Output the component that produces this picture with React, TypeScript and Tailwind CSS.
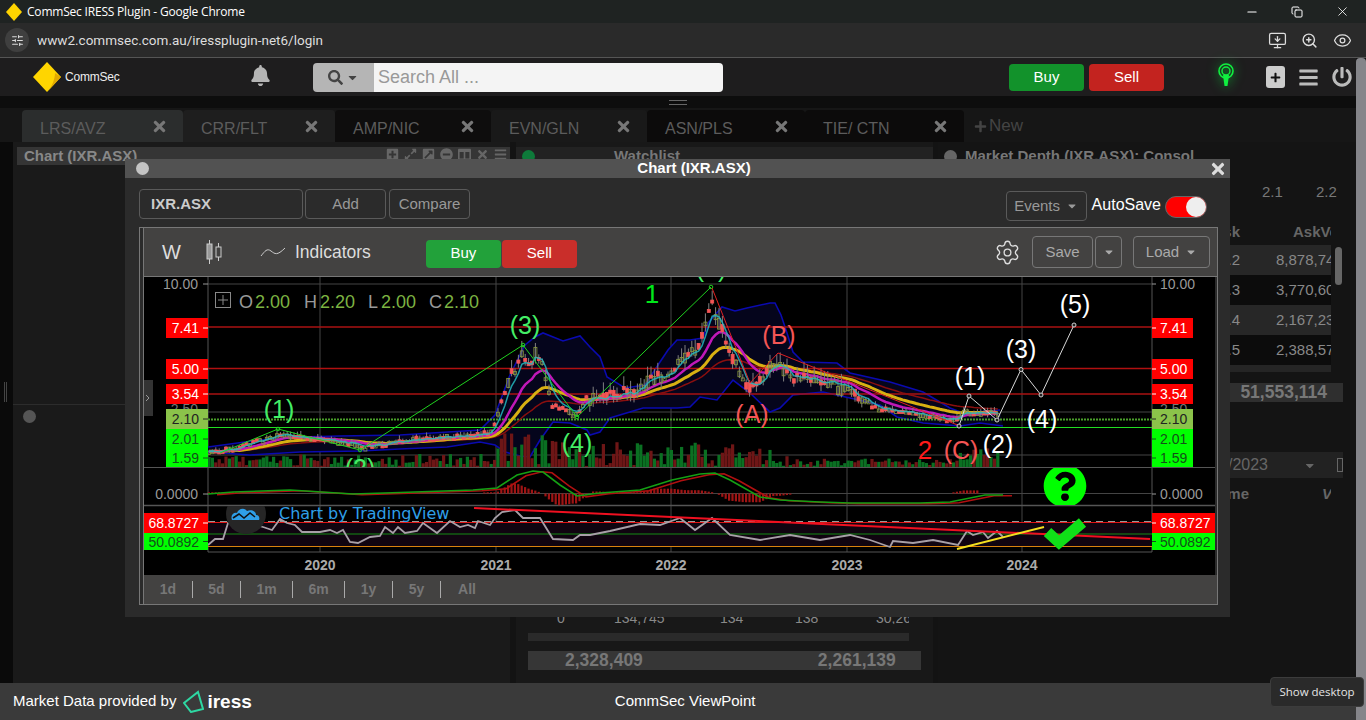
import { Eye, MonitorDown, Settings, ZoomIn, Minus, X, Copy, SlidersHorizontal } from "lucide-react";
import { FaBars, FaBell, FaCaretDown, FaColumns, FaExpandAlt, FaExternalLinkSquareAlt, FaMinusCircle, FaPlus, FaPlusSquare, FaPowerOff, FaQuestionCircle, FaSearch, FaTimes } from "react-icons/fa";

type Pt = [number, number];

// price shape, page coordinates
const closeKeys: Pt[] = [
  [208, 452], [230, 449], [245, 445], [260, 440], [282, 435], [300, 437], [320, 440], [345, 441], [355, 445], [365, 446],
  [385, 444], [420, 438], [445, 437], [470, 436], [490, 432], [497, 418], [503, 395], [510, 378], [517, 365], [523, 350],
  [530, 362], [537, 350], [545, 375], [552, 405], [562, 408], [575, 415], [585, 400], [600, 398], [625, 392], [640, 390],
  [650, 380], [665, 375], [672, 372], [682, 360], [690, 355], [697, 350], [703, 335], [708, 310], [712, 296], [717, 320],
  [724, 332], [730, 355], [738, 370], [745, 385], [752, 388], [760, 378], [770, 368], [778, 360], [785, 375], [800, 378],
  [825, 383], [840, 390], [850, 392], [860, 398], [875, 407], [890, 410], [905, 413], [925, 416], [945, 419], [958, 420],
  [966, 410], [975, 415], [990, 412], [1000, 414],
];
const upperBand: Pt[] = [
  [208, 447], [260, 440], [300, 437], [340, 436], [400, 435], [480, 430], [495, 415], [510, 375], [525, 345], [535, 337], [543, 333],
  [563, 341], [580, 336], [590, 347], [600, 357], [607, 377], [625, 388], [645, 385], [660, 362], [668, 350], [677, 340], [690, 340], [703, 338],
  [708, 323], [722, 307], [735, 311], [747, 308], [770, 303], [775, 303], [781, 315], [787, 333], [793, 352], [803, 362], [837, 363],
  [850, 373], [890, 382], [923, 392], [950, 408], [963, 413], [1000, 410],
];
const lowerBand: Pt[] = [
  [208, 452], [250, 455], [300, 452], [360, 451], [400, 449], [447, 447], [480, 442], [495, 445], [505, 452], [520, 456], [530, 457],
  [540, 440], [553, 422], [570, 423], [587, 430], [590, 435], [600, 432], [610, 418], [643, 408], [677, 408], [690, 407], [700, 397],
  [717, 400], [733, 380], [750, 393], [770, 412], [780, 408], [793, 395], [823, 392], [850, 398], [880, 405], [897, 417], [923, 423],
  [960, 426], [980, 423], [1003, 426],
];
const macdKeys: Pt[] = [
  [208, 494], [233, 492], [290, 490], [353, 494], [400, 492.5], [473, 490], [497, 488], [517, 475], [533, 471], [543, 472], [560, 485],
  [577, 496], [600, 493], [640, 490], [672, 480], [700, 474], [715, 473], [730, 480], [760, 497], [780, 500], [820, 502], [850, 503],
  [920, 503], [950, 502], [960, 500], [985, 495], [1003, 495],
];
const rsiKeys: Pt[] = [
  [208, 545], [215, 539], [223, 539], [228, 523], [243, 520], [255, 525], [263, 527], [272, 530], [280, 519], [287, 523], [295, 525],
  [302, 532], [320, 532], [330, 530], [337, 533], [343, 530], [350, 542], [358, 543], [370, 537], [380, 536], [385, 527], [393, 533],
  [398, 527], [405, 533], [417, 531], [423, 523], [437, 533], [450, 521], [460, 527], [468, 525], [475, 528], [478, 521], [490, 525],
  [495, 518], [502, 512], [515, 510], [523, 518], [540, 518], [553, 539], [573, 540], [580, 535], [590, 535], [610, 531], [640, 524],
  [660, 525], [680, 518], [695, 530], [712, 518], [730, 535], [760, 540], [790, 535], [820, 540], [850, 535], [870, 540], [890, 547],
  [893, 541], [913, 543], [933, 540], [958, 545], [967, 531], [973, 535], [983, 532], [988, 538], [997, 531], [1003, 537],
];

function lerp(keys: Pt[], x: number) {
  for (let i = 1; i < keys.length; i++) {
    if (x <= keys[i][0]) {
      const [x0, y0] = keys[i - 1];
      const [x1, y1] = keys[i];
      return y0 + ((y1 - y0) * (x - x0)) / (x1 - x0);
    }
  }
  return keys[keys.length - 1][1];
}
function rnd(i: number) {
  const s = Math.sin(i * 12.9898 + 4.1) * 43758.5453;
  return s - Math.floor(s);
}
const pts = (k: Pt[]) => k.map((p) => p.join(",")).join(" ");

const candles = Array.from({ length: 233 }, (_, i) => {
  const x = 209 + i * 3.4;
  const base = lerp(closeKeys, x);
  const scale = base < 400 ? 13 : 5;
  const close = base + (rnd(i) - 0.5) * scale;
  const open = base + (rnd(i + 300) - 0.5) * scale;
  return { x, open, close, hi: Math.min(open, close) - rnd(i + 600) * scale * 0.9, lo: Math.max(open, close) + rnd(i + 900) * scale * 0.5 };
});
function ema(period: number) {
  const a = 2 / (period + 1);
  let v = candles[0].close;
  return candles.map((c) => {
    v = a * c.close + (1 - a) * v;
    return `${c.x.toFixed(1)},${v.toFixed(1)}`;
  }).join(" ");
}
function volEnvelope(x: number) {
  if (x < 300) return 10;
  if (x < 490) return 12;
  if (x < 560) return 34;
  if (x < 735) return 24;
  if (x < 790) return 18;
  if (x < 960) return 8;
  return 18;
}
const bars = candles.map((c, i) => ({ x: c.x, h: 1 + rnd(i + 1200) * volEnvelope(c.x), up: c.close <= c.open }));

function WaveLabel({ x, y, c, t, size = 25 }: { x: number; y: number; c: string; t: string; size?: number }) {
  return <text x={x} y={y} fill={c} fontSize={size} textAnchor="middle">{t}</text>;
}
function LeftTag({ x, y, h, w, bg, fg, t }: { x: number; y: number; h: number; w: number; bg: string; fg: string; t: string }) {
  return (
    <g>
      <rect x={x} y={y} width={w} height={h} fill={bg} />
      <line x1={x + w - 5} x2={x + w} y1={y + h / 2} y2={y + h / 2} stroke={fg} />
      <text x={x + w - 9} y={y + h / 2 + 5} fontSize={14} fill={fg} textAnchor="end">{t}</text>
    </g>
  );
}
function RightTag({ x, y, h, w, bg, fg, t }: { x: number; y: number; h: number; w: number; bg: string; fg: string; t: string }) {
  return (
    <g>
      <rect x={x} y={y} width={w} height={h} fill={bg} />
      <line x1={x} x2={x + 4} y1={y + h / 2} y2={y + h / 2} stroke={fg} />
      <text x={x + 8} y={y + h / 2 + 5} fontSize={14} fill={fg}>{t}</text>
    </g>
  );
}

function Chart() {
  const tags = [
    { y: 318, h: 20, bg: "#ff0000", fg: "#ffffff", t: "7.41" },
    { y: 359, h: 20, bg: "#ff0000", fg: "#ffffff", t: "5.00" },
    { y: 384, h: 20, bg: "#ff0000", fg: "#ffffff", t: "3.54" },
    { y: 409, h: 20, bg: "#8bc34a", fg: "#222222", t: "2.10" },
    { y: 429, h: 20, bg: "#00ff00", fg: "#14501a", t: "2.01" },
    { y: 449, h: 18, bg: "#00ff00", fg: "#14501a", t: "1.59" },
  ];
  return (
    <svg viewBox="144 277 1071 298" width="1071" height="298" className="block bg-black">
      <defs>
        <clipPath id="q"><rect x="1030" y="468" width="80" height="37" /></clipPath>
        <clipPath id="price"><rect x="144" y="277" width="1071" height="190" /></clipPath>
        <clipPath id="tv"><rect x="208" y="506" width="100" height="46" /></clipPath>
      </defs>

      {/* grid */}
      {[320, 496, 671, 847, 1022].map((x) => <line key={x} x1={x} x2={x} y1="277" y2="552" stroke="#444" />)}
      {[284, 412, 455].map((y) => <line key={y} x1="208" x2="1152" y1={y} y2={y} stroke="#444" />)}
      <line x1="208" x2="208" y1="277" y2="552" stroke="#555" />
      <line x1="1152" x2="1152" y1="277" y2="552" stroke="#555" />

      {/* bollinger */}
      <polygon points={pts([...upperBand, ...[...lowerBand].reverse()])} fill="#05051c" />
      <polyline points={pts(upperBand)} fill="none" stroke="#0a0ab0" strokeWidth="1.6" />
      <polyline points={pts(lowerBand)} fill="none" stroke="#0a0ab0" strokeWidth="1.6" />

      {/* levels */}
      <line x1="208" x2="1152" y1="327" y2="327" stroke="#a81212" strokeWidth="1.3" />
      <line x1="208" x2="1152" y1="368.5" y2="368.5" stroke="#b01010" strokeWidth="1.3" />
      <line x1="208" x2="1152" y1="394" y2="394" stroke="#a81212" strokeWidth="1.3" />
      <line x1="208" x2="1152" y1="419.5" y2="419.5" stroke="#4aa02a" strokeWidth="2" strokeDasharray="2 1" />
      <line x1="208" x2="1152" y1="427.5" y2="427.5" stroke="#22dd22" strokeWidth="1" />

      {/* volume */}
      {bars.map((b) => <rect key={b.x} x={b.x - 1.6} y={467 - b.h} width="3.2" height={b.h} fill={b.up ? "#0a7022" : "#6e1616"} />)}

      {/* moving averages under candles */}
      <polyline points={ema(40)} fill="none" stroke="#8a0f0f" strokeWidth="1.5" />
      <polyline points={ema(24)} fill="none" stroke="#d8b012" strokeWidth="3" />
      <polyline points={ema(12)} fill="none" stroke="#c018b8" strokeWidth="2.5" />

      {/* candles */}
      {candles.map((c) => {
        const up = c.close <= c.open;
        return (
          <g key={c.x}>
            <line x1={c.x} x2={c.x} y1={c.hi} y2={c.lo} stroke="#808080" />
            <rect x={c.x - 1.5} y={Math.min(c.open, c.close)} width="3" height={Math.max(3, Math.abs(c.open - c.close))} fill={up ? "none" : "#f45555"} stroke={up ? "#8c9c3c" : "#f45555"} strokeWidth="0.8" />
          </g>
        );
      })}
      <polyline points={ema(4)} fill="none" stroke="#25b8c0" strokeWidth="1.5" opacity="0.85" />

      {/* waves */}
      <polyline points="220,453 278,429 360,450 523,345 577,417 711,287" fill="none" stroke="#1fd11f" />
      {[[278, 429], [360, 450], [523, 345], [577, 417], [711, 287]].map(([x, y]) => <circle key={x} cx={x} cy={y} r="1.8" fill="none" stroke="#1fd11f" />)}
      <polyline points="712,288 750,383 778,353 960,426" fill="none" stroke="#e02020" />
      <polyline points="959,426 969,396 997,420 1021,369.5 1041,395 1074,325" fill="none" stroke="#d8d8d8" />
      {[[959, 426], [969, 396], [997, 420], [1021, 369.5], [1041, 395], [1074, 325]].map(([x, y]) => <circle key={x} cx={x} cy={y} r="2" fill="#222" stroke="#d0d0d0" />)}

      <g clipPath="url(#price)">
        <WaveLabel x={279} y={418} c="#44ee66" t="(1)" />
        <WaveLabel x={360} y={477} c="#44ee66" t="(2)" />
        <WaveLabel x={525} y={334} c="#44ee66" t="(3)" />
        <WaveLabel x={577} y={452} c="#44ee66" t="(4)" />
        <WaveLabel x={711} y={277} c="#44ee66" t="(5)" />
        <WaveLabel x={652} y={303} c="#00e81a" t="1" size={26} />
        <WaveLabel x={779} y={344} c="#f45555" t="(B)" />
        <WaveLabel x={752} y={423} c="#f45555" t="(A)" />
        <WaveLabel x={925} y={459} c="#ff1a1a" t="2" size={26} />
        <WaveLabel x={961} y={459} c="#f45555" t="(C)" />
        <WaveLabel x={970} y={385} c="#ffffff" t="(1)" />
        <WaveLabel x={1021} y={358} c="#ffffff" t="(3)" />
        <WaveLabel x={1075} y={313} c="#ffffff" t="(5)" />
        <WaveLabel x={1042} y={428} c="#ffffff" t="(4)" />
        <WaveLabel x={998} y={453} c="#ffffff" t="(2)" />
      </g>

      {/* legend */}
      <rect x="215.5" y="292.5" width="15" height="15" fill="none" stroke="#888" />
      <path d="M223 295v10M218 300h10" stroke="#888" />
      <g fontSize="18">
        <text x="239" y="308" fill="#999">O</text><text x="255" y="308" fill="#7cb342">2.00</text>
        <text x="304" y="308" fill="#999">H</text><text x="320" y="308" fill="#7cb342">2.20</text>
        <text x="368" y="308" fill="#999">L</text><text x="381" y="308" fill="#7cb342">2.00</text>
        <text x="429" y="308" fill="#999">C</text><text x="444" y="308" fill="#7cb342">2.10</text>
      </g>

      {/* price scales */}
      <text x="198" y="289" fontSize="14" fill="#999" textAnchor="end">10.00</text>
      <text x="1160" y="289" fontSize="14" fill="#999">10.00</text>
      <line x1="203" x2="208" y1="284" y2="284" stroke="#999" />
      <line x1="1152" x2="1156" y1="284" y2="284" stroke="#999" />
      <text x="198" y="414" fontSize="14" fill="#777" textAnchor="end">2.50</text>
      <text x="1160" y="414" fontSize="14" fill="#777">2.50</text>
      {tags.map((t) => (
        <g key={t.t}>
          <LeftTag x={166} y={t.y} w={42} h={t.h} bg={t.bg} fg={t.fg} t={t.t} />
          <RightTag x={1152} y={t.y} w={41} h={t.h} bg={t.bg} fg={t.fg} t={t.t} />
        </g>
      ))}

      {/* side tab */}
      <rect x="144" y="380" width="9" height="36" fill="#333" />
      <path d="M146 395l3 3-3 3" fill="none" stroke="#999" />

      {/* pane separators */}
      <line x1="144" x2="1215" y1="467.5" y2="467.5" stroke="#555" />
      <line x1="144" x2="1215" y1="505.5" y2="505.5" stroke="#555" strokeWidth="1.5" />

      {/* macd */}
      <line x1="208" x2="1152" y1="493.5" y2="493.5" stroke="#444" />
      {bars.map((b, i) => {
        const m = lerp(macdKeys, b.x);
        const s = lerp(macdKeys, b.x - 14);
        const h = Math.min(12, Math.abs(m - s) * 1.1);
        if (h < 1 || b.x > 980) return null;
        return <rect key={i} x={b.x - 1.2} y={m < s ? 493.5 - h : 493.5} width="2.2" height={h} fill="#a01414" />;
      })}
      <polyline points={pts(macdKeys.map(([x, y]) => [x + 9, y + 0.8] as Pt))} fill="none" stroke="#b01010" strokeWidth="1.6" />
      <polyline points={pts(macdKeys)} fill="none" stroke="#14a014" strokeWidth="1.6" />
      <text x="198" y="499" fontSize="14" fill="#999" textAnchor="end">0.0000</text>
      <text x="1160" y="499" fontSize="14" fill="#999">0.0000</text>
      <line x1="203" x2="208" y1="494" y2="494" stroke="#999" />
      <line x1="1152" x2="1156" y1="494" y2="494" stroke="#999" />

      {/* rsi */}
      <rect x="208" y="522" width="944" height="24" fill="#100410" />
      <line x1="208" x2="1152" y1="521.5" y2="521.5" stroke="#999" strokeDasharray="7 5" />
      <line x1="208" x2="1152" y1="522.5" y2="522.5" stroke="#e01515" />
      <line x1="208" x2="1152" y1="534" y2="534" stroke="#158a15" />
      <line x1="208" x2="1152" y1="546.5" y2="546.5" stroke="#d8820e" />
      <polyline points={pts(rsiKeys)} fill="none" stroke="#a8a0a8" strokeWidth="1.8" />
      <line x1="474" y1="508" x2="1150" y2="539" stroke="#f01020" strokeWidth="2" />
      <line x1="957" y1="549" x2="1044" y2="527" stroke="#f5e020" strokeWidth="2" />
      <line x1="208" x2="1152" y1="552" y2="552" stroke="#555" />
      <LeftTag x={144} y={513} w={64} h={20} bg="#ff0000" fg="#ffffff" t="68.8727" />
      <LeftTag x={144} y={533} w={64} h={17} bg="#00ff00" fg="#14501a" t="50.0892" />
      <RightTag x={1152} y={513} w={64} h={20} bg="#ff0000" fg="#ffffff" t="68.8727" />
      <RightTag x={1152} y={533} w={64} h={17} bg="#00ff00" fg="#14501a" t="50.0892" />

      {/* watermark */}
      <g clipPath="url(#tv)">
        <circle cx="246" cy="514" r="20" fill="#262626" />
      </g>
      <path d="M232 520c-2-5 2-8 5-7 1-4 7-6 10-2 4-2 9 0 9 4 3 0 4 3 3 5z" fill="#2f9fe8" />
      <path d="M233 518l6-4 5 4 6-5 5 4" fill="none" stroke="#111" strokeWidth="1.6" />
      <text x="279" y="519" fontSize="16" fill="#2f9fe8" fontFamily="'DejaVu Sans', sans-serif">Chart by TradingView</text>

      {/* badges */}
      <g clipPath="url(#q)">
        <FaQuestionCircle x={1043} y={464} size={44} color="#00ff00" />
      </g>
      <path d="M1047.5 532l11.5 10.5 23.5-20" fill="none" stroke="#10e018" strokeWidth="11" />

      {/* x axis */}
      {[[320, "2020"], [496, "2021"], [671, "2022"], [847, "2023"], [1022, "2024"]].map(([x, t]) => (
        <text key={t} x={x} y="570" fontSize="14" fontWeight="700" fill="#aaa" textAnchor="middle">{t}</text>
      ))}
    </svg>
  );
}

function ChartDialog() {
  return (
    <div className="absolute left-[125px] top-[159px] flex h-[458px] w-[1105px] flex-col bg-[#2b2b2b]">
      <div className="relative flex h-[19px] shrink-0 items-center justify-center bg-[#525252] pl-[33px]">
        <span className="absolute left-[11px] h-[13px] w-[13px] rounded-full bg-[#c4c4c4]" />
        <span className="text-[15px] font-bold text-white">Chart (IXR.ASX)</span>
        <FaTimes className="absolute right-[3px] text-[18px] text-[#dddddd]" />
      </div>
      <div className="flex h-[49px] shrink-0 items-start pl-[14px] pr-[23px]">
        <div className="mt-[11px] flex h-[30px] w-[164px] items-center rounded border border-[#5a5a5a] pl-[11px] pt-px text-[15px] font-bold text-[#cccccc]">IXR.ASX</div>
        <div className="ml-[2px] mt-[11px] flex h-[30px] w-[81px] items-center justify-center rounded border border-[#5a5a5a] pt-px text-[15px] text-[#999999]">Add</div>
        <div className="ml-[3px] mt-[11px] flex h-[30px] w-[81px] items-center justify-center rounded border border-[#5a5a5a] pt-px text-[15px] text-[#999999]">Compare</div>
        <div className="ml-auto mt-[13px] flex h-[30px] w-[81px] items-center justify-center gap-[6px] rounded border border-[#5a5a5a] text-[15px] text-[#999999]">Events <FaCaretDown className="text-[12px]" /></div>
        <span className="ml-[5px] mt-[17px] text-[16px] leading-[20px] text-white">AutoSave</span>
        <div className="ml-[4px] mt-[18px] flex h-[22px] w-[42px] justify-end rounded-full border border-[#666666] bg-[#ff0000]">
          <span className="h-[20px] w-[20px] rounded-full bg-[#eeeeee]" />
        </div>
      </div>
      <div className="ml-[14px] w-[1079px] border border-[#777777] pl-[3px]">
        <div className="border-l border-[#777777]">
          <div className="flex h-[49px] items-center border-b border-[#777777] bg-[#434241]">
            <span className="ml-[18px] w-[20px] text-[20px] text-[#dddddd]">W</span>
            <svg width="18" height="24" viewBox="0 0 18 24" className="ml-[23px] text-[#cccccc]" fill="none" stroke="currentColor">
              <path d="M4.5 0v24M13.5 3v18" />
              <rect x="2" y="4" width="5" height="15" fill="#999" />
              <rect x="11" y="7" width="5" height="10" fill="#434241" />
            </svg>
            <svg width="26" height="14" viewBox="0 0 26 14" className="ml-[37px]" fill="none" stroke="#cccccc">
              <path d="M1 11c4-5 6-8 10-5s6 5 14-3" />
            </svg>
            <span className="ml-[9px] text-[17.5px] text-[#dddddd]">Indicators</span>
            <div className="ml-[55px] mt-[3px] flex h-[28px] w-[75px] items-center justify-center rounded bg-[#22a13a] text-[15px] text-white">Buy</div>
            <div className="ml-px mt-[3px] flex h-[28px] w-[75px] items-center justify-center rounded bg-[#c92e2a] text-[15px] text-white">Sell</div>
            <Settings className="ml-auto h-[27px] w-[27px] text-[#dddddd]" strokeWidth={1.2} />
            <div className="ml-[11px] flex h-[32px] w-[61px] items-center justify-center rounded-sm border border-[#777777] text-[15px] text-[#aaaaaa]">Save</div>
            <div className="ml-[2px] flex h-[32px] w-[27px] items-center justify-center rounded-sm border border-[#777777] text-[#aaaaaa]"><FaCaretDown className="text-[12px]" /></div>
            <div className="ml-[11px] mr-[7px] flex h-[32px] w-[77px] items-center justify-center gap-[6px] rounded border border-[#777777] text-[15px] text-[#aaaaaa]">Load <FaCaretDown className="text-[12px]" /></div>
          </div>
          <Chart />
          <div className="flex h-[29px] items-center bg-[#434241] text-[14px] font-bold text-[#777777]">
            {[["1d", 49], ["5d", 48], ["1m", 52], ["6m", 52], ["1y", 48], ["5y", 48], ["All", 52]].map(([t, w], i) => (
              <span key={t} style={{ width: w as number }} className={`flex h-[17px] items-center justify-center ${i < 6 ? "border-r border-[#aaaaaa]" : ""}`}>{t}</span>
            ))}
          </div>
        </div>
      </div>
    </div>
  );
}

function BackgroundTabs() {
  const tabs = [
    { t: "LRS/AVZ", w: 161, bg: "bg-[#2b2d2d]" },
    { t: "CRR/FLT", w: 152, bg: "bg-[#1e1e1e]" },
    { t: "AMP/NIC", w: 156, bg: "bg-[#0e0d0d]" },
    { t: "EVN/GLN", w: 156, bg: "bg-[#191919]" },
    { t: "ASN/PLS", w: 158, bg: "bg-[#0c0b0b]" },
    { t: "TIE/ CTN", w: 159, bg: "bg-[#0c0b0b]" },
  ];
  return (
    <div className="flex h-[34px] shrink-0 items-end bg-[#161616] pl-[22px]">
      {tabs.map((tab) => (
        <div key={tab.t} style={{ width: tab.w }} className={`flex h-[32px] items-center rounded-t pl-[18px] pr-[15px] text-[16px] text-[#5c5c5c] ${tab.bg}`}>
          <span className="pt-[5px]">{tab.t}</span>
          <FaTimes className="ml-auto text-[17px] text-[#777777]" />
        </div>
      ))}
      <div className="flex h-[32px] w-[78px] items-center gap-[2px] pl-[10px] text-[17px] text-[#444444]">
        <FaPlus className="text-[13px]" /> New
      </div>
    </div>
  );
}

function DepthRow({ a, b, light }: { a: string; b: string; light: boolean }) {
  return (
    <div className={`flex h-[30px] w-[393px] items-center overflow-hidden whitespace-nowrap text-[15px] text-[#888888] ${light ? "bg-[#272727]" : "bg-[#0c0c0c]"}`}>
      <span className="w-[302px] shrink-0 text-right">{a}</span>
      <span className="shrink-0 pl-[36px]">{b}</span>
    </div>
  );
}

export default function App() {
  return (
    <div className="relative flex h-[720px] w-[1366px] flex-col overflow-hidden bg-[#131313] font-['Liberation_Sans',Arial,sans-serif]">
      {/* browser title bar */}
      <div className="flex h-[23px] shrink-0 items-center bg-[#1f2322] pl-[6px] font-['Open_Sans',sans-serif] text-[12px] text-white">
        <svg width="16" height="18" viewBox="0 0 16 18"><path d="M8 0l8 9-8 9-8-9z" fill="#ffd400" /></svg>
        <span className="ml-[5px] tracking-[-0.2px]">CommSec IRESS Plugin - Google Chrome</span>
        <Minus className="ml-auto h-[14px] w-[14px] text-white" />
        <Copy className="ml-[32px] h-[12px] w-[12px] text-white" />
        <X className="ml-[32px] mr-[16px] h-[15px] w-[15px] text-white" strokeWidth={1.3} />
      </div>
      {/* address bar */}
      <div className="flex h-[35px] shrink-0 items-center border-b border-[#555555] bg-[#2a2a2a] pl-[5px] pr-[14px]">
        <span className="flex h-[24px] w-[24px] items-center justify-center rounded-full bg-[#3f3f3f]">
          <SlidersHorizontal className="h-[13px] w-[13px] text-[#dddddd]" />
        </span>
        <span className="ml-[8px] font-['Roboto',sans-serif] text-[13.5px] text-[#dddddd]">www2.commsec.com.au/iressplugin-net6/login</span>
        <MonitorDown className="ml-auto h-[19px] w-[19px] text-[#dddddd]" strokeWidth={1.6} />
        <ZoomIn className="ml-[14px] h-[17px] w-[17px] text-[#dddddd]" strokeWidth={2} />
        <Eye className="ml-[15px] h-[19px] w-[19px] text-[#dddddd]" strokeWidth={1.6} />
      </div>

      <div className="flex min-h-0 flex-1">
        <div className="flex min-w-0 flex-1 flex-col">
          {/* app header */}
          <div className="flex h-[38px] shrink-0 items-center bg-[#1e1d1e]">
            <svg width="28" height="30" viewBox="0 0 28 30" className="ml-[33px]">
              <path d="M14 0l14 15-14 15L0 15z" fill="#ffd500" />
              <path d="M14 30l14-15-6-4c0 6-3 14-8 19z" fill="#e0a800" />
            </svg>
            <span className="ml-[4px] w-[60px] text-[12px] tracking-[-0.2px] text-[#eeeeee]">CommSec</span>
            <FaBell className="ml-[125px] mb-[3px] text-[21px] text-[#b5b5b5]" />
            <div className="ml-[42px] flex h-[29px] w-[410px] overflow-hidden rounded">
              <div className="flex w-[61px] items-center justify-center gap-[3px] bg-[#b5b5b5] text-[#444444]">
                <FaSearch className="text-[15px]" /><FaCaretDown className="text-[13px]" />
              </div>
              <div className="flex flex-1 items-center bg-[#f4f4f4] pl-[4px] text-[18px] text-[#999999]">Search All ...</div>
            </div>
            <div className="ml-[286px] flex h-[27px] w-[75px] items-center justify-center rounded bg-[#12922b] text-[15px] text-white">Buy</div>
            <div className="ml-[5px] flex h-[27px] w-[75px] items-center justify-center rounded bg-[#c3231f] text-[15px] text-white">Sell</div>
            <svg width="18" height="24" viewBox="0 0 18 24" className="ml-[53px] mb-[4px] drop-shadow-[0_0_6px_rgba(0,255,60,0.6)]" fill="none" stroke="#10f040">
              <circle cx="9" cy="8" r="7" strokeWidth="1.6" />
              <circle cx="9" cy="8" r="4" strokeWidth="1.4" />
              <path d="M6 12h6l-1.5 11h-3z" fill="#10f040" stroke="none" />
            </svg>
            <span className="ml-[31px] flex h-[22px] w-[19px] items-center justify-center rounded-[3px] bg-[#cccccc] text-[#111111]"><FaPlus className="text-[11px]" /></span>
            <FaBars className="ml-[13px] text-[21px] text-[#bbbbbb]" />
            <FaPowerOff className="ml-[13px] text-[20px] text-[#bbbbbb]" />
          </div>
          {/* splitter */}
          <div className="flex h-[12px] shrink-0 items-center justify-center bg-[#0d0d0d]">
            <span className="h-[5px] w-[18px] border-y border-[#666666]" />
          </div>
          <BackgroundTabs />

          {/* docked panels behind the dialog */}
          <div className="flex min-h-0 flex-1">
            <div className="w-[13px] shrink-0 bg-[#0a0a0a] pt-[240px] pl-[4px]">
              <span className="block h-[20px] w-[3px] border-x border-[#444444]" />
            </div>
            <div className="flex w-[497px] shrink-0 flex-col bg-[#1a1a1a] pt-[5px]">
              <div className="ml-[4px] flex h-[18px] items-center justify-between bg-[#353535] pl-[7px] pr-[3px] text-[15px] font-bold text-[#888888]">
                Chart (IXR.ASX)
                <span className="flex items-center gap-[5px] pb-[4px] text-[13px] text-[#666666]">
                  <FaPlusSquare /><FaExpandAlt /><FaExternalLinkSquareAlt /><FaMinusCircle /><FaColumns /><FaTimes /><FaBars />
                </span>
              </div>
              <div className="mt-[239px] h-px bg-[#2c2c2c]" />
              <span className="ml-[10px] mt-[5px] h-[13px] w-[13px] rounded-full bg-[#555555]" />
            </div>
            <div className="ml-[6px] flex w-[417px] shrink-0 flex-col bg-[#181818] pt-[5px]">
              <div className="flex h-[18px] items-center bg-[#222222] pl-[6px] text-[15px] font-bold text-[#777777]">
                <span className="h-[13px] w-[13px] rounded-full bg-[#0e7a3a]" />
                <span className="ml-[79px]">Watchlist</span>
              </div>
              <div className="flex-1" />
              <div className="relative h-[12px] whitespace-nowrap text-[14px] leading-[12px] text-[#888888]">
                <span className="absolute left-[41px]">0</span>
                <span className="absolute left-[98px]">134,745</span>
                <span className="absolute left-[204px]">134</span>
                <span className="absolute left-[279px]">138</span>
                <span className="absolute left-[360px] w-[33px] overflow-hidden">30,261</span>
              </div>
              <div className="ml-[12px] mt-[9px] h-[8px] w-[381px] bg-[#2a2a2a]" />
              <div className="ml-[12px] mt-[10px] flex h-[19px] w-[393px] items-center bg-[#363636] text-[17.5px] font-bold text-[#777777]">
                <span className="ml-[37px]">2,328,409</span>
                <span className="ml-[175px]">2,261,139</span>
              </div>
              <div className="h-[13px]" />
            </div>
            <div className="ml-[5px] flex min-w-0 flex-1 flex-col overflow-hidden bg-[#141414] pt-[5px]">
              <div className="flex h-[18px] items-center whitespace-nowrap pl-[6px] text-[15px] font-bold text-[#777777]">
                <span className="mr-[8px] h-[13px] w-[13px] rounded-full bg-[#666666]" />
                Market Depth (IXR.ASX): Consol
              </div>
              <div className="relative mt-[16px] h-[20px] text-[15px] text-[#777777]">
                <span className="absolute left-[324px]">2.1</span>
                <span className="absolute left-[378px]">2.2</span>
              </div>
              <div className="relative mt-[20px] h-[20px] text-[15px] font-bold text-[#666666]">
                <span className="absolute left-0 w-[302px] text-right">Ask</span>
                <span className="absolute left-[355px] w-[38px] overflow-hidden">AskVol</span>
              </div>
              <div className="relative mt-[4px]">
                <DepthRow a="2.2" b="8,878,745" light />
                <DepthRow a="2.3" b="3,770,605" light={false} />
                <DepthRow a="2.4" b="2,167,231" light />
                <DepthRow a="2.5" b="2,388,571" light={false} />
                <div className="h-[7px] w-[393px] bg-[#252525]" />
                <span className="absolute left-[397px] top-[2px] h-[38px] w-[7px] rounded bg-[#666666]" />
              </div>
              <div className="mt-[11px] flex h-[19px] w-[405px] items-center justify-end bg-[#2f2f2f] pr-[16px] text-[17.5px] font-bold text-[#777777]">51,553,114</div>
              <div className="mt-[50px] flex h-[26px] w-[405px] items-center overflow-hidden whitespace-nowrap bg-[#222222] text-[16px] text-[#666666]">
                <span className="w-[330px] shrink-0 text-right">07/11/2023</span>
                <FaCaretDown className="ml-[37px] text-[13px]" />
                <span className="ml-[22px] h-[14px] w-[8px] border border-[#666666]" />
              </div>
              <div className="relative mt-[5px] h-[18px] text-[15px] font-bold text-[#666666]">
                <span className="absolute left-0 w-[311px] text-right">Volume</span>
                <span className="absolute left-[384px] w-[9px] overflow-hidden italic">Vol</span>
              </div>
            </div>
          </div>

          {/* footer */}
          <div className="flex h-[37px] shrink-0 items-center bg-[#3a3a3a] pl-[13px] text-[15px] text-white">
            <span>Market Data provided by</span>
            <svg width="21" height="23" viewBox="0 0 21 23" className="ml-[7px]" fill="none" stroke="#2ed8a3" strokeWidth="2">
              <path d="M15 2l5 17-12 3-7-9z" />
            </svg>
            <span className="ml-[3px] text-[19px] font-bold leading-none text-white">iress</span>
            <span className="ml-[363px]">CommSec ViewPoint</span>
          </div>
        </div>
        {/* page scrollbar */}
        <div className="w-[10px] shrink-0 rounded-t bg-[#85858a]" />
      </div>

      <ChartDialog />

      <div className="absolute left-[1270px] top-[677px] flex h-[30px] w-[94px] items-center justify-center rounded border border-[#3c3c3c] bg-[#2a2a2a] font-['Open_Sans',sans-serif] text-[11.5px] text-[#e5e5e5]">
        Show desktop
      </div>
    </div>
  );
}
